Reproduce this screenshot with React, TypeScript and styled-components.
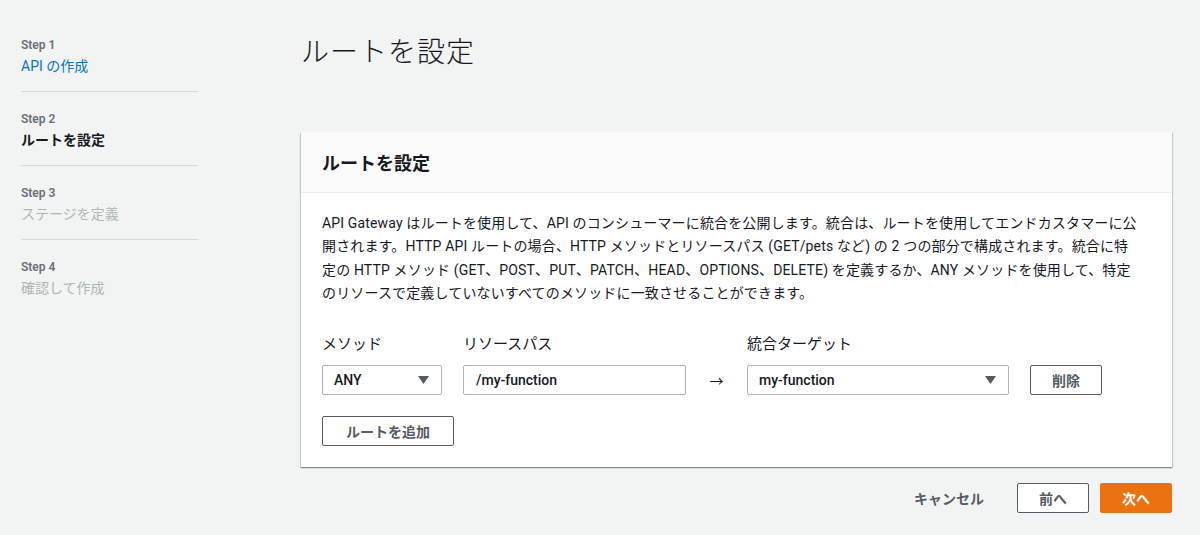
import React from 'react'
import styled, { createGlobalStyle } from 'styled-components'

const GlobalStyle = createGlobalStyle`
    html, body {
        margin: 0;
        padding: 0;
        background: #f2f3f3;
    }
    body {
        font-family: Roboto, "Noto Sans CJK JP", sans-serif;
        color: #16191f;
    }
`

type StepState = 'done' | 'current' | 'todo'

const steps: { label: string; title: string; state: StepState }[] = [
    { label: 'Step 1', title: 'API の作成', state: 'done' },
    { label: 'Step 2', title: 'ルートを設定', state: 'current' },
    { label: 'Step 3', title: 'ステージを定義', state: 'todo' },
    { label: 'Step 4', title: '確認して作成', state: 'todo' },
]

const Caret = () => (
    <svg width="11" height="8" viewBox="0 0 11 8">
        <path d="M0 0 H11 L5.5 8 Z" fill="#545b64" />
    </svg>
)

const App: React.FC = () => {
    return (
        <Page>
            <GlobalStyle />
            <Sidebar>
                {steps.map((s) => (
                    <StepItem key={s.label}>
                        <StepLabel>{s.label}</StepLabel>
                        <StepTitle state={s.state}>{s.title}</StepTitle>
                    </StepItem>
                ))}
            </Sidebar>
            <Main>
                <PageTitle>ルートを設定</PageTitle>
                <Card>
                    <CardHeader>ルートを設定</CardHeader>
                    <CardBody>
                        <Description>
                            API Gateway はルートを使用して、API のコンシューマーに統合を公開します。統合は、ルートを使用してエンドカスタマーに公<br />
                            開されます。HTTP API ルートの場合、HTTP メソッドとリソースパス (GET/pets など) の 2 つの部分で構成されます。統合に特<br />
                            定の HTTP メソッド (GET、POST、PUT、PATCH、HEAD、OPTIONS、DELETE) を定義するか、ANY メソッドを使用して、特定<br />
                            のリソースで定義していないすべてのメソッドに一致させることができます。
                        </Description>
                        <RouteGrid>
                            <FieldLabel>メソッド</FieldLabel>
                            <FieldLabel>リソースパス</FieldLabel>
                            <span />
                            <FieldLabel>統合ターゲット</FieldLabel>
                            <span />
                            <Select>
                                <span>ANY</span>
                                <Caret />
                            </Select>
                            <TextInput defaultValue="/my-function" />
                            <Arrow>→</Arrow>
                            <Select>
                                <span>my-function</span>
                                <Caret />
                            </Select>
                            <Button width={72}>削除</Button>
                        </RouteGrid>
                        <Button width={132}>ルートを追加</Button>
                    </CardBody>
                </Card>
                <Footer>
                    <TextButton>キャンセル</TextButton>
                    <Button width={72}>前へ</Button>
                    <PrimaryButton>次へ</PrimaryButton>
                </Footer>
            </Main>
        </Page>
    )
}

export default App

const Page = styled.div`
    display: flex;
    min-height: 535px;
    padding: 0 28px 0 21px;
    box-sizing: border-box;
`

const Sidebar = styled.nav`
    width: 177px;
    margin-right: 103px;
    padding-top: 18px;
    flex-shrink: 0;
`

const StepItem = styled.div`
    padding: 18px 0 14px;
    border-bottom: 1px solid #d5dbdb;
    &:last-child {
        border-bottom: 0;
    }
`

const StepLabel = styled.div`
    font-size: 12px;
    line-height: 18px;
    font-weight: 600;
    color: #687078;
`

const StepTitle = styled.div<{ state: StepState }>`
    margin-top: 1px;
    font-size: 14px;
    line-height: 22px;
    font-weight: ${(p) => (p.state === 'current' ? 700 : 400)};
    color: ${(p) => (p.state === 'done' ? '#0073bb' : p.state === 'current' ? '#16191f' : '#aab7b8')};
`

const Main = styled.main`
    flex: 1;
    padding-top: 35px;
`

const PageTitle = styled.h1`
    margin: 0 0 61px;
    font-size: 28px;
    line-height: 36px;
    font-weight: 300;
    letter-spacing: 1px;
`

const Card = styled.section`
    background: #fff;
    box-shadow: 0 1px 1px 0 rgba(0, 28, 36, 0.3), 1px 1px 1px 0 rgba(0, 28, 36, 0.15), -1px 1px 1px 0 rgba(0, 28, 36, 0.15);
`

const CardHeader = styled.h2`
    margin: 0;
    padding: 0 21px;
    height: 60px;
    display: flex;
    align-items: center;
    background: #fafafa;
    border-bottom: 1px solid #eaeded;
    font-size: 18px;
    font-weight: 700;
`

const CardBody = styled.div`
    padding: 19px 21px 21px;
`

const Description = styled.p`
    margin: 0 0 28px;
    font-size: 14px;
    line-height: 23.4px;
    white-space: nowrap;
    letter-spacing: 0.15px;
`

const RouteGrid = styled.div`
    display: grid;
    grid-template-columns: 120px 223px 19px 262px 72px;
    column-gap: 21px;
    row-gap: 11px;
    align-items: center;
    margin-bottom: 21px;
`

const FieldLabel = styled.label`
    font-size: 15px;
    line-height: 20px;
    color: #16191f;
`

const Select = styled.div`
    height: 30px;
    box-sizing: border-box;
    border: 1px solid #aab7b8;
    border-radius: 2px;
    padding: 0 12px 0 11px;
    display: flex;
    align-items: center;
    justify-content: space-between;
    font-size: 14px;
    font-weight: 500;
    color: #16191f;
`

const TextInput = styled.input`
    height: 30px;
    width: 100%;
    box-sizing: border-box;
    border: 1px solid #aab7b8;
    border-radius: 2px;
    padding: 0 12px;
    font-family: inherit;
    font-size: 14px;
    font-weight: 500;
    color: #16191f;
    outline: none;
`

const Arrow = styled.span`
    text-align: center;
    font-size: 14px;
    color: #16191f;
`

const Button = styled.button<{ width: number }>`
    width: ${(p) => p.width}px;
    height: 30px;
    box-sizing: border-box;
    border: 1px solid #545b64;
    border-radius: 2px;
    background: #fff;
    color: #545b64;
    font-family: inherit;
    font-size: 14px;
    font-weight: 700;
    cursor: pointer;
    padding: 0;
`

const Footer = styled.div`
    display: flex;
    justify-content: flex-end;
    align-items: center;
    gap: 11px;
    margin-top: 16px;
`

const TextButton = styled.button`
    border: 0;
    background: transparent;
    color: #545b64;
    font-family: inherit;
    font-size: 14px;
    font-weight: 700;
    padding: 0 22px 0 0;
    height: 30px;
    cursor: pointer;
`

const PrimaryButton = styled.button`
    width: 72px;
    height: 30px;
    border: 1px solid #ec7211;
    border-radius: 2px;
    background: #ec7211;
    color: #fff;
    font-family: inherit;
    font-size: 14px;
    font-weight: 700;
    cursor: pointer;
    padding: 0;
`
